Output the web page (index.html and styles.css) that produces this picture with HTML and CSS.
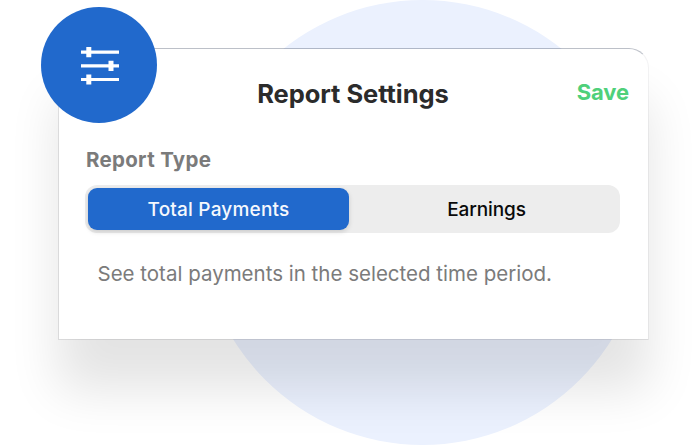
FILE: index.html
```html
<!DOCTYPE html>
<html lang="en">
<head>
<meta charset="utf-8">
<title>Report Settings</title>
<link rel="stylesheet" href="styles.css">
</head>
<body>
<main class="stage">
  <div class="backdrop"></div>
  <section class="card">
    <header class="card-header">
      <h1 class="title">Report Settings</h1>
      <span class="save">Save</span>
    </header>
    <h2 class="label">Report Type</h2>
    <div class="segmented">
      <div class="segment active"><span>Total Payments</span></div>
      <div class="segment"><span>Earnings</span></div>
    </div>
    <p class="hint">See total payments in the selected time period.</p>
  </section>
  <div class="badge">
    <svg width="38" height="38" viewBox="0 0 38 38" fill="#fff">
      <path d="M0 3.5h38v3.2H0zM5.3 0h5v10.2h-5zM0 17.2h38v3.2H0zM27.5 13.7h5v10.2h-5zM0 30.9h38v3.2H0zM5.3 27.4h5v10.2h-5z"/>
    </svg>
  </div>
</main>
</body>
</html>
```
FILE: styles.css
```css
* { box-sizing: border-box; }
body {
  margin: 0;
  background: #fff;
  font-family: Inter, "Liberation Sans", sans-serif;
}
.stage {
  position: relative;
  width: 692px;
  height: 445px;
  padding: 48px 43px 0 58px;
  overflow: hidden;
}
.backdrop {
  position: absolute;
  left: 200px;
  top: 0;
  width: 445px;
  height: 445px;
  border-radius: 50%;
  background: #ebf1fe;
}
.card {
  position: relative;
  height: 292px;
  padding: 0 28px;
  border: 1px solid rgba(60, 65, 75, .12);
  border-top-color: rgba(60, 70, 95, .34);
  border-right-color: rgba(60, 65, 75, .06);
  border-radius: 0 20px 0 0;
  background: #fff;
  background-clip: padding-box;
  box-shadow: 0 50px 50px rgba(0, 0, 0, .11);
}
.card-header {
  display: grid;
  grid-template-columns: 1fr auto 1fr;
  align-items: center;
  height: 90px;
  margin-right: -9px;
  margin-left: -10px;
}
.title {
  grid-column: 2;
  margin: 0;
  font-size: 25.5px;
  line-height: 30px;
  font-weight: 700;
  letter-spacing: -.05px;
  white-space: nowrap;
  color: #2b2b2b;
}
.save {
  justify-self: end;
  margin-top: -4px;
  font-size: 22px;
  line-height: 28px;
  font-weight: 700;
  letter-spacing: -.1px;
  color: #4fd07a;
}
.label {
  margin: 8px 0 0 -1px;
  font-size: 20.5px;
  line-height: 26px;
  font-weight: 700;
  letter-spacing: .3px;
  color: #7b7b7b;
}
.segmented {
  display: grid;
  grid-template-columns: 261px 1fr;
  height: 48px;
  margin: 12px 0 0 -2px;
  padding: 3px;
  border-radius: 12px;
  background: #ededed;
}
.segment {
  display: flex;
  align-items: center;
  justify-content: center;
  border-radius: 9px;
  font-size: 19px;
  font-weight: 500;
  color: #0a0a0a;
}
.segment:last-child {
  padding-left: 7px;
  letter-spacing: -.1px;
}
.active {
  background: #2169cc;
  color: #f5f8fd;
  letter-spacing: .2px;
  box-shadow: 0 2px 5px rgba(0, 0, 0, .14);
}
.hint {
  margin: 27px 0 0 10.5px;
  font-size: 20.5px;
  line-height: 28px;
  letter-spacing: 0;
  white-space: nowrap;
  color: #7b7b7b;
}
.badge {
  position: absolute;
  left: 41px;
  top: 7px;
  display: flex;
  align-items: center;
  justify-content: center;
  width: 116px;
  height: 116px;
  padding: 2px 0 0 2px;
  border-radius: 50%;
  background: #2169cc;
}
```
